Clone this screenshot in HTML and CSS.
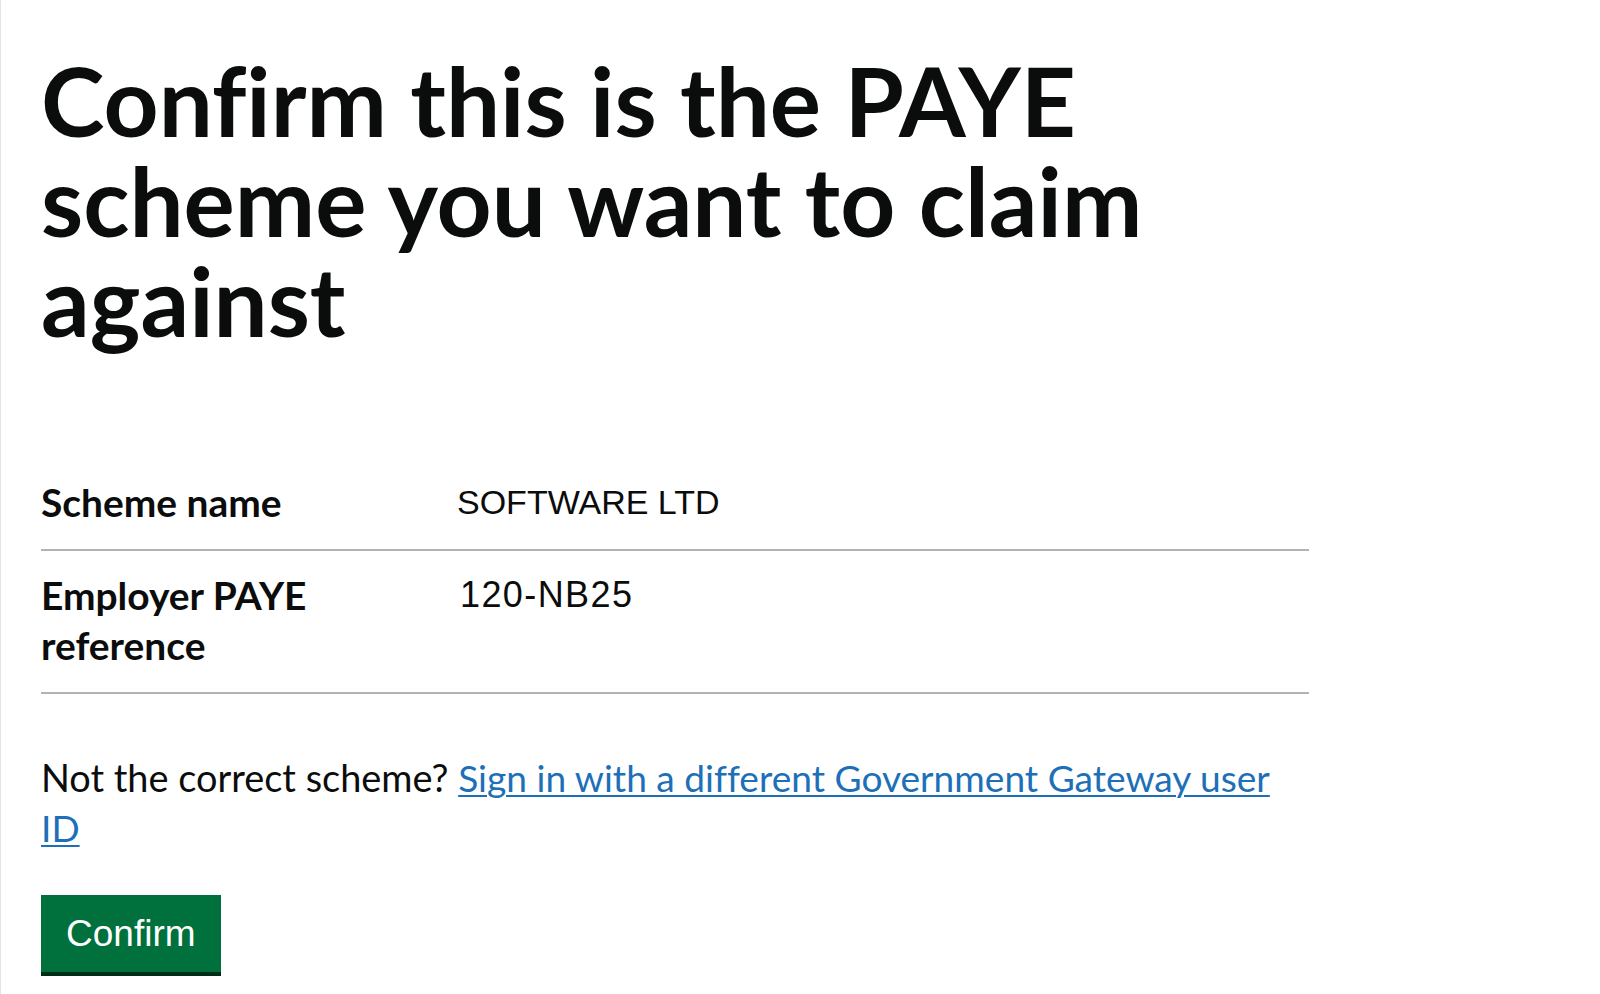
FILE: index.html
```html
<!DOCTYPE html>
<html lang="en">
<head>
<meta charset="utf-8">
<title>Confirm this is the PAYE scheme you want to claim against</title>
<link rel="stylesheet" href="styles.css">
</head>
<body>
<main class="page">
  <h1 class="heading">Confirm this is the PAYE scheme you want to claim against</h1>
  <dl class="summary">
    <div class="summary-row">
      <dt class="summary-key">Scheme name</dt>
      <dd class="summary-value">SOFTWARE LTD</dd>
    </div>
    <div class="summary-row">
      <dt class="summary-key">Employer PAYE reference</dt>
      <dd class="summary-value summary-value--code">120-NB25</dd>
    </div>
  </dl>
  <p class="body-text">Not the correct scheme? <a class="link" href="#">Sign in with a different Government Gateway user ID</a></p>
  <button class="button" type="button">Confirm</button>
</main>
</body>
</html>
```
FILE: styles.css
```css
html, body {
  margin: 0;
  padding: 0;
  background: #ffffff;
}

body {
  font-family: "Lato", "Liberation Sans", sans-serif;
  font-variant-ligatures: none;
  color: #0b0c0c;
}

.page {
  box-sizing: border-box;
  min-height: 994px;
  border-left: 1px solid #e4e4e4;
  padding: 50px 0 0 40px;
}

.heading {
  width: 1268px;
  margin: 0;
  font-weight: 700;
  font-size: 96px;
  line-height: 100px;
  color: #0b0c0c;
}

.summary {
  width: 1268px;
  margin: 108px 0 0 0;
  padding: 0;
}

.summary-row {
  display: grid;
  grid-template-columns: 416px 1fr;
  border-bottom: 2px solid #b1b4b6;
}

.summary-key {
  margin: 0;
  padding: 19px 20px 22px 0;
  font-weight: 700;
  font-size: 38.9px;
  line-height: 50px;
}

.summary-value {
  margin: 0;
  padding: 19px 0 22px 0;
  font-family: "Liberation Sans", Arial, sans-serif;
  font-weight: 400;
  font-size: 34px;
  line-height: 50px;
}

.summary-value--code {
  padding-left: 3px;
  font-size: 36px;
  letter-spacing: 1.4px;
}

.body-text {
  width: 1268px;
  margin: 59px 0 0 0;
  font-weight: 400;
  font-size: 37.9px;
  line-height: 50px;
}

.link {
  font-size: 0.979em;
  color: #1d70b8;
  text-decoration: underline;
  text-decoration-thickness: 2px;
  text-underline-offset: 3px;
}

.button {
  display: block;
  margin: 42px 0 0 0;
  padding: 19px 25px 18px;
  border: 0;
  border-radius: 0;
  background: #00703c;
  color: #ffffff;
  font-family: "Liberation Sans", Arial, sans-serif;
  font-weight: 400;
  font-size: 37px;
  line-height: 40px;
  box-shadow: 0 4px 0 #002d18;
  cursor: pointer;
}
```
